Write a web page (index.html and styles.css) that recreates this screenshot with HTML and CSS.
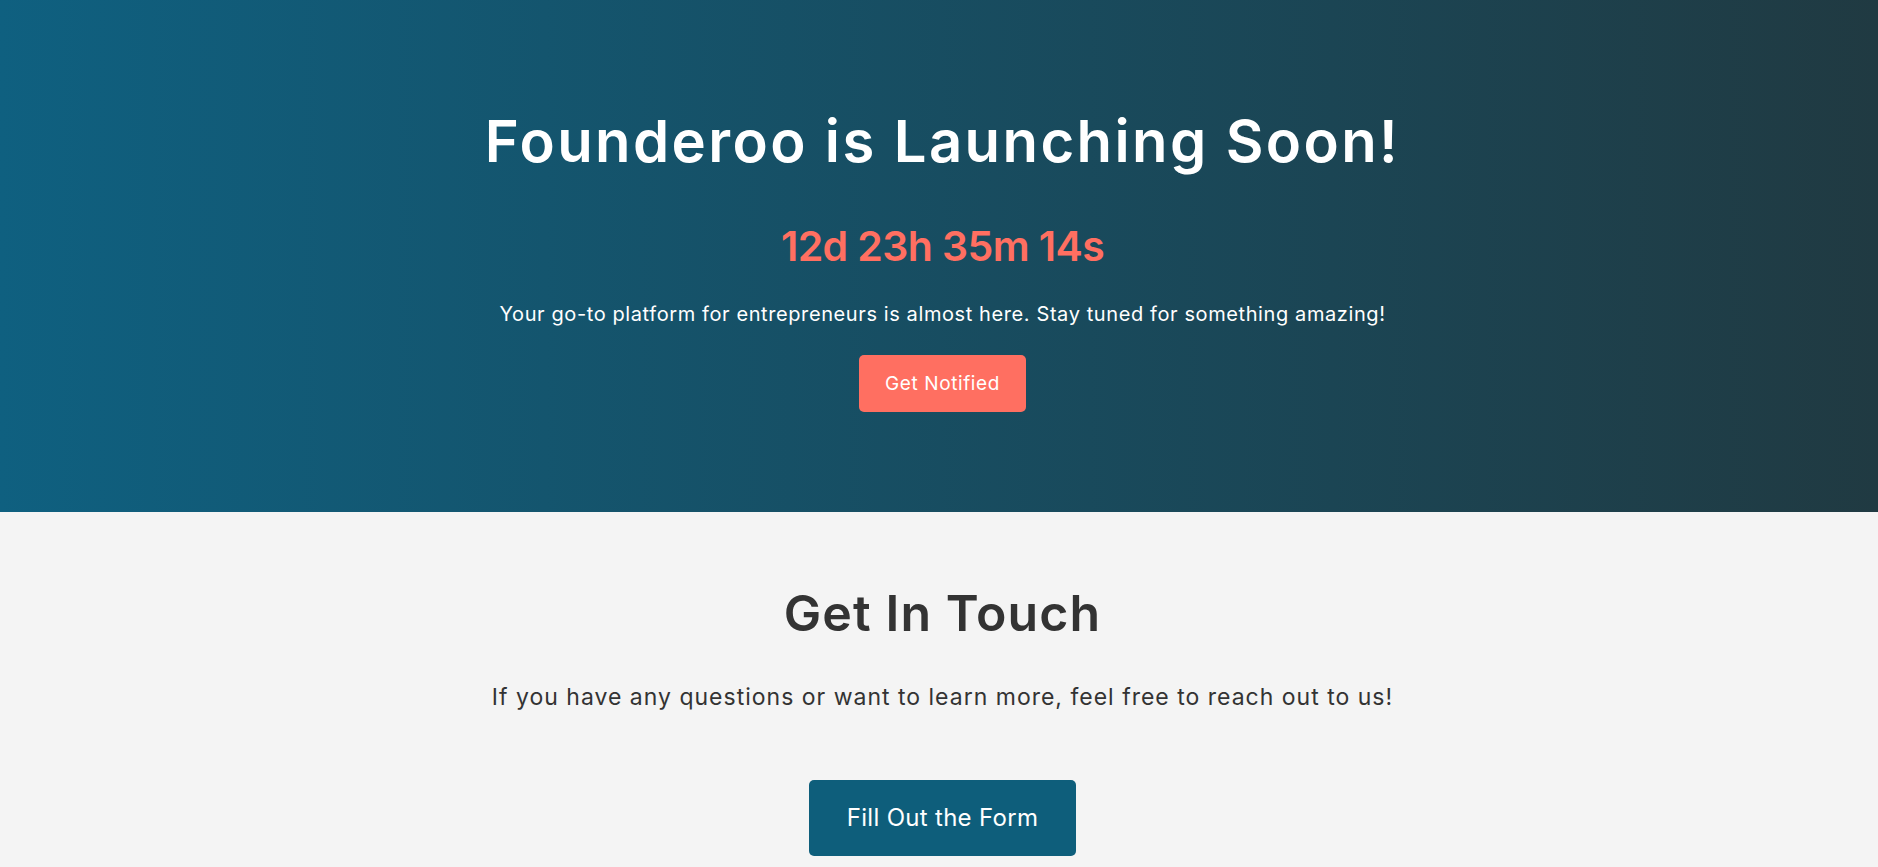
FILE: index.html
```html
<!DOCTYPE html>
<html lang="en">
<head>
<meta charset="utf-8">
<title>Founderoo is Launching Soon!</title>
<link rel="stylesheet" href="styles.css">
</head>
<body>
<header class="hero">
  <h1 class="hero-title">Founderoo is Launching Soon!</h1>
  <div class="countdown">12d 23h 35m 14s</div>
  <p class="hero-sub">Your go-to platform for entrepreneurs is almost here. Stay tuned for something amazing!</p>
  <a class="btn btn-coral" href="#">Get Notified</a>
</header>
<section class="contact">
  <h2 class="contact-title">Get In Touch</h2>
  <p class="contact-text">If you have any questions or want to learn more, feel free to reach out to us!</p>
  <a class="btn btn-teal" href="#">Fill Out the Form</a>
</section>
</body>
</html>
```
FILE: styles.css
```css
* { box-sizing: border-box; }
html, body { margin: 0; padding: 0; }
body {
  font-family: "Inter", "Open Sans", sans-serif;
  background: #f4f4f4;
  color: #333;
}
.hero {
  background: linear-gradient(90deg, #0f6080 0%, #203a42 100%);
  color: #fff;
  text-align: center;
  padding: 106px 20px 100px 27px;
  display: flex;
  flex-direction: column;
  align-items: center;
}
.hero-title {
  margin: 0;
  font-size: 58px;
  line-height: 70px;
  font-weight: 600;
  letter-spacing: 2.4px;
}
.countdown {
  margin-top: 45px;
  font-size: 41px;
  line-height: 50px;
  font-weight: 600;
  letter-spacing: -0.6px;
  color: #ff6f61;
}
.hero-sub {
  margin: 29px 0 0;
  font-size: 20px;
  line-height: 28px;
  font-weight: 400;
  letter-spacing: 0.6px;
}
.btn {
  display: inline-block;
  text-decoration: none;
  color: #fff;
  border-radius: 5px;
}
.btn-coral {
  margin-top: 27px;
  background: #ff6f61;
  height: 57px;
  line-height: 57px;
  padding: 0 26px;
  font-size: 19px;
  letter-spacing: 0.6px;
}
.contact {
  text-align: center;
  padding: 71px 20px 40px 27px;
  display: flex;
  flex-direction: column;
  align-items: center;
}
.contact-title {
  margin: 0;
  font-size: 50px;
  line-height: 60px;
  font-weight: 600;
  letter-spacing: 1.1px;
  color: #333;
}
.contact-text {
  margin: 38px 0 0;
  font-size: 23px;
  line-height: 32px;
  letter-spacing: 1px;
  color: #333;
}
.btn-teal {
  margin-top: 67px;
  background: #0e5e7b;
  height: 76px;
  line-height: 76px;
  padding: 0 38px;
  font-size: 24px;
  letter-spacing: 0.3px;
}
```
